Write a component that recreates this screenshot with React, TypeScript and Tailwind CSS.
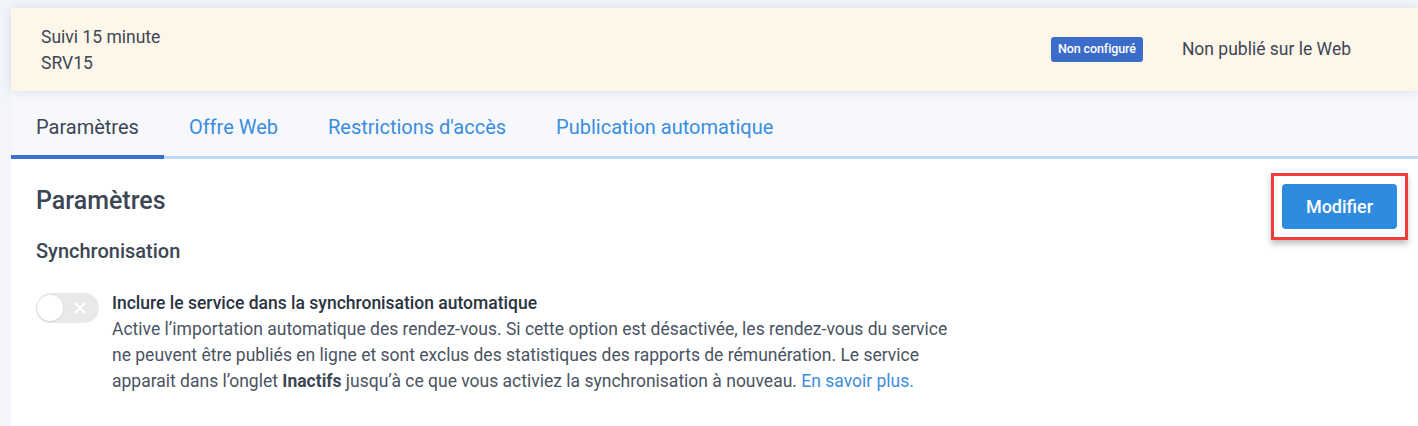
import React from "react";

const tabs = ["Paramètres", "Offre Web", "Restrictions d'accès", "Publication automatique"];

export default function App() {
  return (
    <div
      className="w-[1418px] h-[426px] overflow-hidden bg-[#f3f5fa] pl-[11px] pt-[8px]"
      style={{ fontFamily: "Roboto, 'Noto Sans', sans-serif" }}
    >
      <div className="flex flex-col h-full">
        {/* Header card */}
        <div className="relative z-10 flex items-center h-[83px] bg-[#fff6ea] pl-[30px] pr-[67px] shadow-[0_0_10px_rgba(160,175,205,0.35)]">
          <div className="text-[17.5px] leading-[26px] text-[#3d4654]">
            <div>Suivi 15 minute</div>
            <div>SRV15</div>
          </div>
          <div className="ml-auto flex items-center">
            <span className="inline-flex items-center h-[25px] px-[7px] rounded-[3px] bg-[#3b6cc9] text-white text-[12.5px] font-medium tracking-[-0.1px]">
              Non configuré
            </span>
            <span className="ml-[39px] text-[17.5px] text-[#3d4654]">Non publié sur le Web</span>
          </div>
        </div>

        {/* Tabs */}
        <div className="flex h-[68px] bg-[#f7f8fc] border-b-[3px] border-[#bfdaf4]">
          {tabs.map((t, i) => (
            <div
              key={t}
              className={
                i === 0
                  ? "flex items-center pt-[8px] px-[25px] text-[20px] text-[#3d4654] border-b-[4px] border-[#3a6fcd] -mb-[3px]"
                  : "flex items-center pt-[8px] pb-[1px] px-[25px] text-[20px] text-[#3a8ddf]"
              }
            >
              {t}
            </div>
          ))}
        </div>

        {/* Content */}
        <div className="flex-1 bg-white pl-[25px] pr-[10px] pt-[14px]">
          <div className="flex items-start justify-between">
            <h2 className="mt-[13px] text-[25px] leading-[30px] font-medium text-[#3d4654]">Paramètres</h2>
            <div className="border-[3px] border-[#f03c3c] px-[8px] py-[8px] shadow-[0_4px_6px_rgba(0,0,0,0.25)]">
              <button className="w-[115px] h-[45px] rounded-[4px] bg-[#2e8be0] text-white text-[18px] font-medium">
                Modifier
              </button>
            </div>
          </div>
          <h3 className="-mt-[2px] text-[20px] leading-[26px] font-medium text-[#3d4654]">Synchronisation</h3>

          <div className="mt-[26px] flex items-start">
            <div className="mt-[3px] relative w-[63px] h-[30px] rounded-full bg-[#e8e9eb] shrink-0">
              <div className="absolute left-[1px] top-[2px] w-[26px] h-[26px] rounded-full bg-white shadow-[0_1px_2px_rgba(0,0,0,0.12)]" />
              <svg className="absolute left-[38px] top-[9px]" width="12" height="12" viewBox="0 0 12 12">
                <path d="M1.5 1.5 L10.5 10.5 M10.5 1.5 L1.5 10.5" stroke="#ffffff" strokeWidth="2.2" strokeLinecap="round" />
              </svg>
            </div>
            <div className="ml-[13px] w-[850px]">
              <div className="text-[17.5px] leading-[26px] font-medium text-[#2a3341]">
                Inclure le service dans la synchronisation automatique
              </div>
              <p className="text-[17.5px] leading-[26px] text-[#4a5362]">
                Active l’importation automatique des rendez-vous. Si cette option est désactivée, les rendez-vous du service
                ne peuvent être publiés en ligne et sont exclus des statistiques des rapports de rémunération. Le service
                apparait dans l’onglet <b className="font-bold text-[#3d4654]">Inactifs</b> jusqu’à ce que vous activiez la
                synchronisation à nouveau. <span className="text-[#3a8ddf]">En savoir plus.</span>
              </p>
            </div>
          </div>
        </div>
      </div>
    </div>
  );
}
